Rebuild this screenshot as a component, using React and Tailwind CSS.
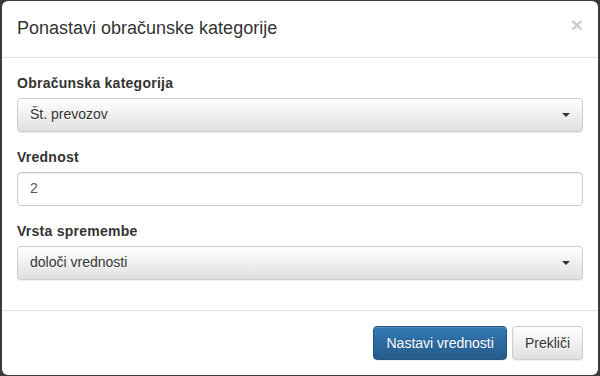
import React from "react";

function Caret() {
  return (
    <span className="inline-block w-0 h-0 border-l-[4px] border-r-[4px] border-t-[4px] border-l-transparent border-r-transparent border-t-[#333]" />
  );
}

function SelectBox({ value }) {
  return (
    <div className="flex items-center justify-between h-[34px] px-[12px] rounded-[4px] border border-[#ccc] bg-gradient-to-b from-white to-[#e0e0e0] shadow-[inset_0_1px_0_rgba(255,255,255,0.15),0_1px_1px_rgba(0,0,0,0.075)] text-[14px] text-[#333] [text-shadow:0_1px_0_#fff]">
      <span>{value}</span>
      <Caret />
    </div>
  );
}

function Field({ label, children }) {
  return (
    <div className="mb-[15px]">
      <div className="mb-[5px] text-[14px] leading-[20px] font-bold text-[#333] tracking-[0.25px]">{label}</div>
      {children}
    </div>
  );
}

export default function App() {
  return (
    <div
      className="w-[600px] h-[376px] bg-[#3b3b3b] pt-[1px] pb-[1px] px-[2px]"
      style={{ fontFamily: '"Liberation Sans", Arial, sans-serif' }}
    >
      <div className="h-full bg-white rounded-[6px] flex flex-col">
        <div className="flex items-start justify-between p-[15px] border-b border-[#e5e5e5]">
          <h4 className="text-[18px] leading-[25.7px] text-[#333] font-normal">Ponastavi obračunske kategorije</h4>
          <span className="text-[21px] leading-none font-bold text-black opacity-20 mt-[-2px] [text-shadow:0_1px_0_#fff]">×</span>
        </div>
        <div className="p-[15px] pb-0 flex-1">
          <Field label="Obračunska kategorija">
            <SelectBox value="Št. prevozov" />
          </Field>
          <Field label="Vrednost">
            <div className="flex items-center h-[34px] px-[12px] rounded-[4px] border border-[#ccc] bg-white shadow-[inset_0_1px_1px_rgba(0,0,0,0.075)] text-[14px] text-[#555]">
              2
            </div>
          </Field>
          <Field label="Vrsta spremembe">
            <SelectBox value="določi vrednosti" />
          </Field>
        </div>
        <div className="flex justify-end gap-[5px] p-[15px] border-t border-[#e5e5e5]">
          <button className="h-[34px] px-[12px] rounded-[4px] border border-[#245580] bg-gradient-to-b from-[#337ab7] to-[#265a88] text-white text-[14px] [text-shadow:0_-1px_0_rgba(0,0,0,0.2)] shadow-[inset_0_1px_0_rgba(255,255,255,0.15),0_1px_1px_rgba(0,0,0,0.075)]">
            Nastavi vrednosti
          </button>
          <button className="h-[34px] px-[12px] rounded-[4px] border border-[#ccc] bg-gradient-to-b from-white to-[#e0e0e0] text-[#333] text-[14px] [text-shadow:0_1px_0_#fff] shadow-[inset_0_1px_0_rgba(255,255,255,0.15),0_1px_1px_rgba(0,0,0,0.075)]">
            Prekliči
          </button>
        </div>
      </div>
    </div>
  );
}
